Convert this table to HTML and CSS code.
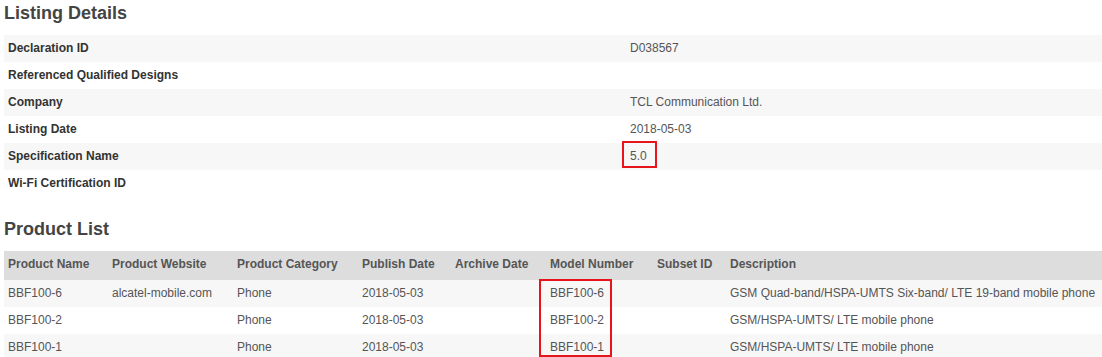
FILE: index.html
```html
<!DOCTYPE html>
<html lang="en">
<head>
<meta charset="utf-8">
<title>Listing Details</title>
<link rel="stylesheet" href="styles.css">
</head>
<body>
<div class="page">
  <h2 class="section-title">Listing Details</h2>
  <div class="details">
    <div class="detail-row"><div class="label">Declaration ID</div><div class="value">D038567</div></div>
    <div class="detail-row"><div class="label">Referenced Qualified Designs</div><div class="value"></div></div>
    <div class="detail-row"><div class="label">Company</div><div class="value">TCL Communication Ltd.</div></div>
    <div class="detail-row"><div class="label">Listing Date</div><div class="value">2018-05-03</div></div>
    <div class="detail-row"><div class="label">Specification Name</div><div class="value">5.0</div></div>
    <div class="detail-row"><div class="label">Wi-Fi Certification ID</div><div class="value"></div></div>
    <div class="mark mark-spec"></div>
  </div>

  <h2 class="section-title second">Product List</h2>
  <div class="products-wrap">
    <table class="products">
      <colgroup>
        <col class="c1"><col class="c2"><col class="c3"><col class="c4"><col class="c5"><col class="c6"><col class="c7"><col class="c8">
      </colgroup>
      <thead>
        <tr>
          <th>Product Name</th><th>Product Website</th><th>Product Category</th><th>Publish Date</th><th>Archive Date</th><th>Model Number</th><th>Subset ID</th><th>Description</th>
        </tr>
      </thead>
      <tbody>
        <tr><td>BBF100-6</td><td>alcatel-mobile.com</td><td>Phone</td><td>2018-05-03</td><td></td><td>BBF100-6</td><td></td><td>GSM Quad-band/HSPA-UMTS Six-band/ LTE 19-band mobile phone</td></tr>
        <tr><td>BBF100-2</td><td></td><td>Phone</td><td>2018-05-03</td><td></td><td>BBF100-2</td><td></td><td>GSM/HSPA-UMTS/ LTE mobile phone</td></tr>
        <tr><td>BBF100-1</td><td></td><td>Phone</td><td>2018-05-03</td><td></td><td>BBF100-1</td><td></td><td>GSM/HSPA-UMTS/ LTE mobile phone</td></tr>
      </tbody>
    </table>
    <div class="mark mark-model"></div>
  </div>
</div>
</body>
</html>
```

FILE: styles.css
```css
html, body {
  margin: 0;
  padding: 0;
  background: #ffffff;
}

body {
  font-family: "Liberation Sans", Arial, sans-serif;
  font-size: 12px;
  color: #555555;
  overflow: hidden;
}

.page {
  padding: 3px 0 0 4px;
}

.section-title {
  margin: 0 0 12px 0;
  font-size: 18px;
  line-height: 20px;
  font-weight: bold;
  color: #444444;
}

.section-title.second {
  margin-top: 22px;
}

.details {
  position: relative;
  width: 1098px;
}

.detail-row {
  display: grid;
  grid-template-columns: 622px 1fr;
  height: 27px;
  box-sizing: border-box;
}

.detail-row:nth-child(odd) {
  background: #f7f7f7;
}

.label,
.value {
  padding: 6px 4px 6px 4px;
  line-height: 15px;
}

.label {
  font-weight: bold;
  color: #333333;
}

.value {
  color: #555555;
}

.mark {
  position: absolute;
  border: 2px solid #e8141c;
  box-sizing: border-box;
}

.mark-spec {
  left: 618px;
  top: 106px;
  width: 35px;
  height: 27px;
}

.products-wrap {
  position: relative;
  width: 1098px;
}

.products {
  width: 1098px;
  table-layout: fixed;
  border-collapse: collapse;
  border-spacing: 0;
}

.c1 { width: 104px; }
.c2 { width: 125px; }
.c3 { width: 125px; }
.c4 { width: 93px; }
.c5 { width: 95px; }
.c6 { width: 107px; }
.c7 { width: 73px; }
.c8 { width: 376px; }

.products th,
.products td {
  text-align: left;
  padding: 6px 4px 6px 4px;
  line-height: 15px;
  white-space: nowrap;
  overflow: hidden;
  vertical-align: top;
}

.products th {
  background: #dddddd;
  font-weight: bold;
  color: #555555;
  padding-bottom: 8px;
  height: 15px;
}

.products td {
  height: 15px;
  color: #555555;
}

.products tbody tr:nth-child(odd) {
  background: #f7f7f7;
}

.mark-model {
  left: 535px;
  top: 28px;
  width: 73px;
  height: 78px;
}
```
